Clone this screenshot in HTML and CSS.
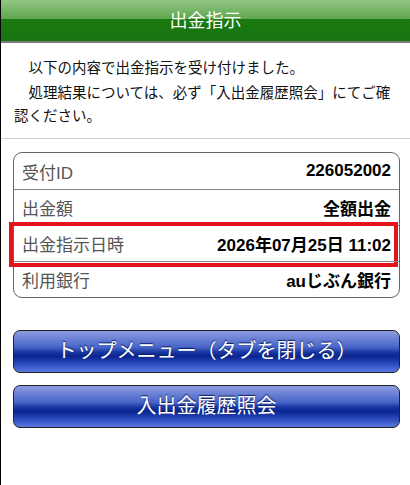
FILE: index.html
```html
<!DOCTYPE html>
<html lang="ja">
<head>
    <meta charset="UTF-8">
    <meta name="viewport" content="width=device-width, initial-scale=1.0">
    <title>出金指示</title>
    <link rel="stylesheet" href="styles.css">
</head>
<body>

    <div class="title-bar">出金指示</div>

    <div class="message">
        <p>以下の内容で出金指示を受け付けました。</p>
        <p>処理結果については、必ず「入出金履歴照会」にてご確認ください。</p>
    </div>

    <div class="detail">
        <div class="detail-row">
            <span class="label">受付ID</span>
            <span class="value">226052002</span>
        </div>
        <div class="detail-row">
            <span class="label">出金額</span>
            <span class="value">全額出金</span>
        </div>
        <div class="detail-row highlight">
            <span class="label">出金指示日時</span>
            <span class="value">2026年07月25日 11:02</span>
        </div>
        <div class="detail-row">
            <span class="label">利用銀行</span>
            <span class="value">auじぶん銀行</span>
        </div>
    </div>

    <div class="buttons">
        <a href="#" class="blue-button">トップメニュー（タブを閉じる）</a>
        <a href="#" class="blue-button">入出金履歴照会</a>
    </div>

</body>
</html>
```

FILE: styles.css
```css
body {
    font-family: "Liberation Sans", "Noto Sans CJK JP", sans-serif;
    margin: 0;
    padding: 0;
    background-color: #fff;
    border-left: 1px solid #000;
    min-height: 485px;
    box-sizing: border-box;
    color: #111;
}

.title-bar {
    height: 41px;
    line-height: 43px;
    text-align: center;
    color: #fff;
    font-size: 18px;
    background: linear-gradient(to bottom, #93c685 0%, #5ea64e 46%, #1a7a10 47%, #167410 100%);
    border-bottom: 2px solid #7a7a7a;
}

.message {
    padding: 14px 13px 10px 13px;
    border-bottom: 1px solid #d0d0d0;
    font-size: 14.5px;
}

.message p {
    margin: 0;
    line-height: 23px;
    text-indent: 1em;
}

.message p + p {
    margin-top: 2px;
}

.detail {
    margin: 13px 10px 0 12px;
    border: 1px solid #666;
    border-radius: 9px;
}

.detail-row {
    position: relative;
    display: flex;
    justify-content: space-between;
    align-items: center;
    height: 36px;
    padding: 0 8px;
    font-size: 17px;
}

.detail-row + .detail-row {
    border-top: 1px solid #888;
    height: 35px;
}

.detail-row .label {
    color: #555;
}

.detail-row .value {
    font-weight: bold;
    color: #000;
}

.highlight::after {
    content: "";
    position: absolute;
    left: -5px;
    right: 1px;
    top: -4px;
    bottom: -6px;
    border: 4px solid #e3141b;
}

.buttons {
    margin: 32px 10px 0 12px;
    display: flex;
    flex-direction: column;
    gap: 12px;
}

.blue-button {
    display: block;
    height: 41px;
    line-height: 41px;
    text-align: center;
    color: #fff;
    font-size: 20px;
    text-decoration: none;
    border: 1px solid #222;
    border-radius: 7px;
    text-shadow: 0 -1px 1px #0a1a60;
    background: linear-gradient(to bottom, #8d9de0 0%, #4763c8 40%, #17369f 52%, #0b2590 62%, #2646b8 78%, #5a78e2 100%);
}
```
